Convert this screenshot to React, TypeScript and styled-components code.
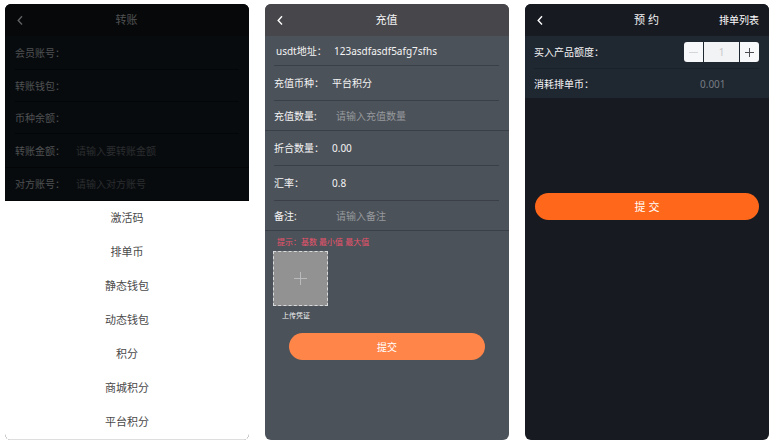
import React from 'react';
import styled, { createGlobalStyle } from 'styled-components';

const GlobalStyle = createGlobalStyle`
  * { box-sizing: border-box; }
  body {
    margin: 0;
    background: #fff;
    font-family: "Noto Sans", "Noto Sans CJK SC", sans-serif;
    font-size: 10px;
    line-height: 16px;
  }
  button, input {
    font: inherit;
    color: inherit;
    margin: 0;
    padding: 0;
    border: 0;
    background: none;
  }
`;

const Gallery = styled.main`
  display: grid;
  grid-template-columns: repeat(3, minmax(0, 1fr));
  gap: 16px;
  min-height: 100vh;
  padding: 4px 8px 5px 5px;
`;

const Screen = styled.section<{ $bg: string; $color: string }>`
  display: flex;
  flex-direction: column;
  overflow: hidden;
  border-radius: 6px;
  background: ${(p) => p.$bg};
  color: ${(p) => p.$color};
`;

const Header = styled.header<{ $bg: string }>`
  display: grid;
  grid-template-columns: 1fr auto 1fr;
  align-items: center;
  height: 32px;
  padding: 0 10px 0 9px;
  background: ${(p) => p.$bg};
`;

const Title = styled.h1`
  margin: 0;
  font-size: 11px;
  font-weight: 400;
`;

const BackButton = styled.button`
  display: flex;
  justify-self: start;
  align-items: center;
  width: 12px;
  height: 16px;
`;

const HeaderLink = styled.a`
  justify-self: end;
  color: #fff;
  text-decoration: none;
`;

const Row = styled.div<{ $height: number; $line: string; $full?: boolean; $indent?: boolean; $gutter: number }>`
  display: grid;
  grid-template-columns: ${(p) => 67 - p.$gutter}px minmax(0, 1fr);
  align-items: center;
  height: ${(p) => p.$height}px;
  margin: 0 ${(p) => (p.$full ? 0 : 10)}px 0 ${(p) => (p.$full ? 0 : p.$gutter)}px;
  padding: 0 ${(p) => (p.$full ? 10 : 0)}px 0 ${(p) => (p.$full ? p.$gutter : p.$indent ? 2 : 0)}px;
  border-bottom: 1px solid ${(p) => p.$line};
`;

const TextInput = styled.input<{ $placeholder: string }>`
  width: 100%;
  height: 16px;
  padding-left: 4px;
  outline: none;
  &::placeholder { color: ${(p) => p.$placeholder}; opacity: 1; }
`;

const Sheet = styled.div`
  display: flex;
  flex-direction: column;
  margin-top: auto;
  background: #fff;
  color: #4a4a4a;
  &::after {
    content: "";
    height: 1px;
    margin: 0 3px;
    background: #dedede;
  }
`;

const SheetOption = styled.button`
  height: 34px;
  font-size: 11px;
`;

const Hint = styled.p`
  margin: 3px 12px 1px;
  font-size: 8px;
  color: #ea526c;
`;

const Upload = styled.div`
  display: flex;
  flex-direction: column;
  align-items: flex-start;
  margin-left: 8px;
`;

const UploadButton = styled.button`
  display: grid;
  place-items: center;
  width: 55px;
  height: 55px;
  border: 1px dashed #d8dadc;
  background: #929292;
`;

const UploadCaption = styled.span`
  width: 46px;
  margin-top: 2px;
  text-align: center;
  font-size: 7px;
`;

const Submit = styled.button<{ $bg: string; $inset: number; $top: number; $size: number }>`
  height: 27px;
  margin: ${(p) => p.$top}px ${(p) => p.$inset}px 0;
  border-radius: 14px;
  background: ${(p) => p.$bg};
  color: #fff;
  font-size: ${(p) => p.$size}px;
`;

const OrderPanel = styled.div`
  background: #1f2731;
`;

const OrderRow = styled.div<{ $height: number }>`
  display: flex;
  align-items: center;
  justify-content: space-between;
  height: ${(p) => p.$height}px;
  margin: 0 10px 0 9px;
  & + & { border-top: 1px solid #1a212a; }
`;

const Stepper = styled.div`
  display: flex;
  gap: 1px;
  height: 20px;
`;

const StepButton = styled.button<{ $side: 'left' | 'right' }>`
  display: grid;
  place-items: center;
  width: 19px;
  border-radius: ${(p) => (p.$side === 'left' ? '3px 0 0 3px' : '0 3px 3px 0')};
  background: #f7f8fa;
  color: #4b4d52;
  &:disabled { color: #d5d6d9; }
`;

const StepValue = styled.input`
  width: 35px;
  background: #f2f3f5;
  color: #c4c6ca;
  text-align: center;
`;

const Cost = styled.output`
  width: 59px;
  color: #777c83;
`;

const UploadIcon = styled.span`
  display: flex;
  color: #b9babb;
`;

const Back = ({ color }: { color: string }) => (
  <BackButton aria-label="返回">
    <svg width="12" height="10" viewBox="0 0 12 10" fill="none" stroke={color} strokeWidth="1.4">
      <path d="M8 1.2 4.2 5.5l3.8 4" />
    </svg>
  </BackButton>
);

const Plus = ({ size }: { size: number }) => (
  <svg width={size} height={size} viewBox={`0 0 ${size} ${size}`} stroke="currentColor">
    <path d={`M0 ${size / 2}H${size}M${size / 2} 0V${size}`} />
  </svg>
);

const wallets = ['激活码', '排单币', '静态钱包', '动态钱包', '积分', '商城积分', '平台积分'];

type Field = {
  id: string;
  label: string;
  height: number;
  value?: string;
  placeholder?: string;
  full?: boolean;
  indent?: boolean;
};

const transferFields: Field[] = [
  { id: 'member', label: '会员账号：', height: 34 },
  { id: 'wallet', label: '转账钱包：', height: 32 },
  { id: 'balance', label: '币种余额：', height: 32 },
  { id: 'amount', label: '转账金额：', height: 34, placeholder: '请输入要转账金额', full: true },
  { id: 'target', label: '对方账号：', height: 33, placeholder: '请输入对方账号', full: true },
];

const rechargeFields: Field[] = [
  { id: 'address', label: 'usdt地址：', height: 30, value: '123asdfasdf5afg7sfhs', indent: true },
  { id: 'coin', label: '充值币种：', height: 35, value: '平台积分' },
  { id: 'quantity', label: '充值数量:', height: 30, placeholder: '请输入充值数量', full: true },
  { id: 'converted', label: '折合数量：', height: 35, value: '0.00' },
  { id: 'rate', label: '汇率：', height: 35, value: '0.8' },
  { id: 'remark', label: '备注:', height: 30, placeholder: '请输入备注', full: true },
];

type FormProps = { fields: Field[]; line: string; placeholder: string; gutter: number };

const FormRows = ({ fields, line, placeholder, gutter }: FormProps) => (
  <>
    {fields.map((f) => (
      <Row key={f.id} $height={f.height} $line={line} $full={f.full} $indent={f.indent} $gutter={gutter}>
        {f.placeholder ? <label htmlFor={f.id}>{f.label}</label> : <span>{f.label}</span>}
        {f.placeholder ? (
          <TextInput id={f.id} placeholder={f.placeholder} $placeholder={placeholder} />
        ) : (
          <span>{f.value}</span>
        )}
      </Row>
    ))}
  </>
);

export default function App() {
  return (
    <>
      <GlobalStyle />
      <Gallery>
        <Screen $bg="#080b0e" $color="#4f5152">
          <Header $bg="#070809">
            <Back color="#606162" />
            <Title>转账</Title>
          </Header>
          <FormRows fields={transferFields} line="#030506" placeholder="#2b2d2f" gutter={10} />
          <Sheet role="listbox" aria-label="转账钱包">
            {wallets.map((w) => (
              <SheetOption key={w} role="option">{w}</SheetOption>
            ))}
          </Sheet>
        </Screen>

        <Screen $bg="#4c5259" $color="#f4f4f5">
          <Header $bg="#47474b">
            <Back color="#ffffff" />
            <Title>充值</Title>
          </Header>
          <FormRows fields={rechargeFields} line="#3b3f47" placeholder="#96999d" gutter={9} />
          <Hint>提示：基数 最小值 最大值</Hint>
          <Upload>
            <UploadButton aria-label="上传凭证">
              <UploadIcon><Plus size={13} /></UploadIcon>
            </UploadButton>
            <UploadCaption>上传凭证</UploadCaption>
          </Upload>
          <Submit $bg="#ff8548" $inset={24} $top={9} $size={10}>提交</Submit>
        </Screen>

        <Screen $bg="#181a22" $color="#f4f4f5">
          <Header $bg="#181a22">
            <Back color="#ffffff" />
            <Title>预 约</Title>
            <HeaderLink href="#orders">排单列表</HeaderLink>
          </Header>
          <OrderPanel>
            <OrderRow $height={32}>
              <label htmlFor="quota">买入产品额度：</label>
              <Stepper>
                <StepButton $side="left" aria-label="减少" disabled>
                  <svg width="9" height="9" viewBox="0 0 9 9" stroke="currentColor">
                    <path d="M0 4.5h9" />
                  </svg>
                </StepButton>
                <StepValue id="quota" defaultValue="1" />
                <StepButton $side="right" aria-label="增加">
                  <Plus size={9} />
                </StepButton>
              </Stepper>
            </OrderRow>
            <OrderRow $height={30}>
              <span>消耗排单币：</span>
              <Cost>0.001</Cost>
            </OrderRow>
          </OrderPanel>
          <Submit $bg="#ff681a" $inset={10} $top={95} $size={11}>提 交</Submit>
        </Screen>
      </Gallery>
    </>
  );
}
